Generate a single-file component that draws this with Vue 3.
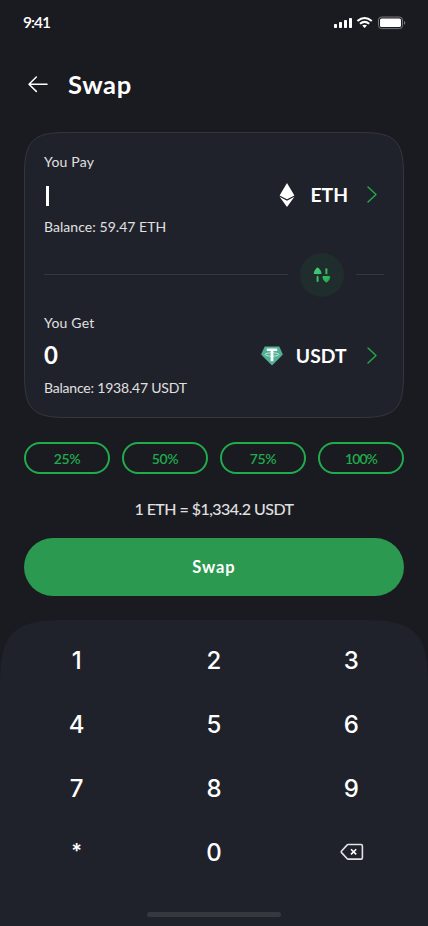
<script setup>
const percents = ['25%', '50%', '75%', '100%']
const keys = ['1', '2', '3', '4', '5', '6', '7', '8', '9', '*', '0']
</script>

<template>
  <main class="screen">
    <div class="status">
      <span class="time">9:41</span>
      <svg class="indicators" width="72" height="14" viewBox="0 0 72 14" fill="#fff">
        <rect x="0" y="8" width="3" height="4" rx=".7" />
        <rect x="5" y="6" width="3" height="6" rx=".7" />
        <rect x="10" y="4" width="3" height="8" rx=".7" />
        <rect x="15" y="2" width="3" height="10" rx=".7" />
        <g fill="none" stroke="#fff" stroke-width="2">
          <path d="M23.4 5.1Q30.6-1.2 37.8 5.1" />
          <path d="M26 7.8Q30.6 4 35.2 7.8" />
        </g>
        <path d="M28.2 9.5Q30.6 7.8 33 9.5L30.6 12Z" />
        <rect x="44.5" y="1" width="24" height="11.6" rx="3" fill="none" stroke="#76777b" />
        <rect x="46" y="2.5" width="21" height="8.6" rx="1.6" />
        <path d="M70 5Q71.3 5.4 71.3 6.8T70 8.7Z" fill="#76777b" />
      </svg>
    </div>

    <header class="header">
      <svg width="20" height="18" viewBox="0 0 20 18" fill="none" stroke="#fff" stroke-width="1.5" stroke-linecap="round" stroke-linejoin="round">
        <path d="M19 9.2H1M8.3 2L1 9.2L8.3 16.4" />
      </svg>
      <h1>Swap</h1>
    </header>

    <section class="card">
      <svg class="card-bg" width="380" height="286" viewBox="0 0 380 286">
        <path d="M.5 42C.5 9 9 .5 42 .5H338C371 .5 379.5 9 379.5 42V244C379.5 277 371 285.5 338 285.5H42C9 285.5 .5 277 .5 244Z" fill="#20222b" stroke="#35373f" />
      </svg>
      <div class="side pay">
        <div class="label l-pay">You Pay</div>
        <div class="row">
          <span class="caret"></span>
          <div class="token eth">
            <svg width="16" height="24" viewBox="0 0 16 24" fill="#fff">
              <path d="M8 0L15.4 12.4L8 16.2L.6 12.4Z" />
              <path d="M.6 13.8L8 17.7L15.4 13.8L8 24Z" />
            </svg>
            <strong>ETH</strong>
            <svg class="chev" width="10" height="17" viewBox="0 0 10 17" fill="none" stroke="#20ac4d" stroke-width="1.4" stroke-linecap="round" stroke-linejoin="round"><path d="M1 1L9 8.5L1 16" /></svg>
          </div>
        </div>
        <div class="label b-eth">Balance: 59.47 ETH</div>
      </div>
      <div class="divider">
        <i class="line"></i>
        <span class="flip">
          <svg width="18" height="16" viewBox="0 0 18 16">
            <defs>
              <linearGradient id="flipFill" x1="0" y1="0" x2="18" y2="16" gradientUnits="userSpaceOnUse">
                <stop offset="0" stop-color="#4bd07b" />
                <stop offset="1" stop-color="#1faa4b" />
              </linearGradient>
            </defs>
            <g fill="url(#flipFill)">
              <path d="M4.6.5C6.2 1.2 8.2 4 8.5 5.7C8.6 6.7 8 7 7.2 7.1Q4.6 7.4 2 7.1C1.1 7 .6 6.6.8 5.7C1.2 4 3 1.2 4.6.5Z" />
              <rect x="3.6" y="9" width="2" height="6" rx=".9" />
              <path d="M13.4 15.7C11.8 15 9.8 12.2 9.5 10.5C9.4 9.5 10 9.2 10.8 9.1Q13.4 8.8 16 9.1C16.9 9.2 17.4 9.6 17.2 10.5C16.8 12.2 15 15 13.4 15.7Z" />
              <rect x="12.4" y="1.3" width="2" height="6" rx=".9" />
            </g>
          </svg>
        </span>
        <i class="line short"></i>
      </div>
      <div class="side get">
        <div class="label l-get">You Get</div>
        <div class="row">
          <span class="amount">0</span>
          <div class="token usdt">
            <svg width="22" height="20" viewBox="0 0 22 20">
              <path d="M4.1.4H17.8Q18.2.4 18.4.8L21.7 8Q21.9 8.5 21.5 9L11.5 18.9Q11 19.4 10.5 18.9L.5 9Q.1 8.5.3 8L3.6.8Q3.8.4 4.1.4Z" fill="#50af95" />
              <path d="M5.8 2.6H16.2V5.1H12.4V15.3H9.6V5.1H5.8Z" fill="#fff" />
              <ellipse cx="11" cy="8.5" rx="6.9" ry="1.7" fill="none" stroke="#fff" stroke-width=".65" />
            </svg>
            <strong>USDT</strong>
            <svg class="chev" width="10" height="17" viewBox="0 0 10 17" fill="none" stroke="#20ac4d" stroke-width="1.4" stroke-linecap="round" stroke-linejoin="round"><path d="M1 1L9 8.5L1 16" /></svg>
          </div>
        </div>
        <div class="label b-usdt">Balance: 1938.47 USDT</div>
      </div>
    </section>

    <div class="percents">
      <button v-for="p in percents" :key="p" :class="{ full: p === '100%' }">{{ p }}</button>
    </div>
    <p class="rate">1 ETH = $1,334.2 USDT</p>
    <button class="submit">Swap</button>

    <section class="keypad">
      <svg class="pad-bg" width="428" height="306" viewBox="0 0 428 306">
        <path d="M0 64C0 13 13 0 64 0H364C415 0 428 13 428 64V306H0Z" fill="#1f222a" />
      </svg>
      <div class="keys">
        <button v-for="k in keys" :key="k" :class="{ star: k === '*' }">{{ k }}</button>
        <button class="erase">
          <svg width="24" height="18" viewBox="0 0 24 18" fill="none" stroke="#e4e4e6" stroke-width="1.6" stroke-linejoin="round">
            <path d="M8.2 1.5H21Q22.4 1.5 22.4 2.9V14.7Q22.4 16.1 21 16.1H8.2Q7.5 16.1 7 15.5L1.6 9.6Q.9 8.8 1.6 8L7 2.1Q7.5 1.5 8.2 1.5Z" />
            <path d="M11 6.2L16.2 11.4M16.2 6.2L11 11.4" stroke="#fff" />
          </svg>
        </button>
      </div>
      <div class="home"></div>
    </section>
  </main>
</template>

<style>
body {
  margin: 0;
  background: #1a1b20;
}
</style>

<style scoped>
.screen {
  box-sizing: border-box;
  width: 428px;
  height: 926px;
  overflow: hidden;
  background: #1a1b20;
  color: #fff;
  font-family: Lato, "Liberation Sans", sans-serif;
}
button {
  border: 0;
  padding: 0;
  background: none;
  color: inherit;
  font: inherit;
}
.status {
  height: 44px;
  padding: 0 22px 0 23px;
  display: flex;
  justify-content: space-between;
  align-items: center;
}
.time {
  font-size: 15.5px;
  font-weight: 600;
  line-height: 20px;
  letter-spacing: -1px;
}
.indicators {
  margin: 2px 0 0;
}
.header {
  height: 80px;
  padding-left: 28px;
  display: flex;
  align-items: center;
  gap: 20px;
}
h1 {
  margin: 0;
  font-size: 25.5px;
  font-weight: 700;
  line-height: 30px;
  letter-spacing: 0.6px;
}
.card {
  position: relative;
  box-sizing: border-box;
  width: 380px;
  height: 286px;
  margin: 8px 24px 0;
  padding: 20px;
}
.card-bg,
.pad-bg {
  position: absolute;
  inset: 0;
}
.side,
.divider {
  position: relative;
}
.label {
  height: 20px;
  font-size: 14px;
  line-height: 20px;
  color: #e0e0e0;
}
.l-pay,
.l-get {
  letter-spacing: 0.2px;
}
.b-eth {
  letter-spacing: 0.05px;
}
.b-usdt {
  letter-spacing: -0.2px;
}
.row {
  height: 45px;
  display: flex;
  align-items: center;
  justify-content: space-between;
}
.caret {
  width: 3px;
  height: 20px;
  margin: 3px 0 0 1.5px;
  background: #fff;
}
.amount {
  padding-bottom: 2px;
  font-size: 24px;
  font-weight: 700;
}
.token {
  display: flex;
  align-items: center;
  font-size: 19.3px;
}
.token strong {
  padding-bottom: 1px;
}
.eth {
  gap: 15px;
}
.usdt {
  gap: 13px;
}
.eth .chev {
  margin: 0 7px 0 4px;
}
.usdt .chev {
  margin: 0 7px 0 7.5px;
}
.divider {
  height: 44px;
  margin: 16px 0;
  display: flex;
  align-items: center;
  gap: 12px;
}
.line {
  height: 1px;
  flex: 1;
  margin-bottom: 1px;
  background: #35383f;
}
.short {
  flex: 0 0 28px;
}
.flip {
  width: 44px;
  height: 44px;
  border-radius: 50%;
  background: #202d2d;
  display: flex;
  align-items: center;
  justify-content: center;
}
.percents {
  margin: 24px 24px 0;
  display: grid;
  grid-template-columns: repeat(4, 1fr);
  gap: 12px;
}
.percents button {
  height: 32px;
  border: 2px solid #20ac4d;
  border-radius: 16px;
  color: #20ac4d;
  font-size: 14px;
  font-weight: 600;
  letter-spacing: -0.3px;
}
.percents .full {
  letter-spacing: -0.9px;
}
.rate {
  margin: 24px 0 0;
  height: 22px;
  line-height: 22px;
  font-size: 16px;
  font-weight: 500;
  letter-spacing: -0.54px;
  text-align: center;
  color: #e0e0e0;
}
.submit {
  display: block;
  width: 380px;
  height: 58px;
  margin: 18px 24px 0;
  border-radius: 29px;
  background: #2b994f;
  font-size: 16.5px;
  font-weight: 700;
  letter-spacing: 0.9px;
}
.keypad {
  position: relative;
  height: 306px;
  margin-top: 24px;
}
.keys {
  position: relative;
  padding: 8px 8px 0;
  display: grid;
  grid-template-columns: repeat(3, 1fr);
  grid-auto-rows: 64px;
}
.keys button {
  display: flex;
  align-items: center;
  justify-content: center;
  font-family: Inter, "Liberation Sans", sans-serif;
  font-size: 24px;
  font-weight: 450;
}
.keys .star {
  padding-bottom: 3px;
  font-size: 20px;
  font-weight: 600;
}
.keys .erase {
  padding-left: 1px;
}
.home {
  position: relative;
  width: 134px;
  height: 5px;
  margin: 28px auto 0;
  border-radius: 3px;
  background: #35383f;
}
</style>
